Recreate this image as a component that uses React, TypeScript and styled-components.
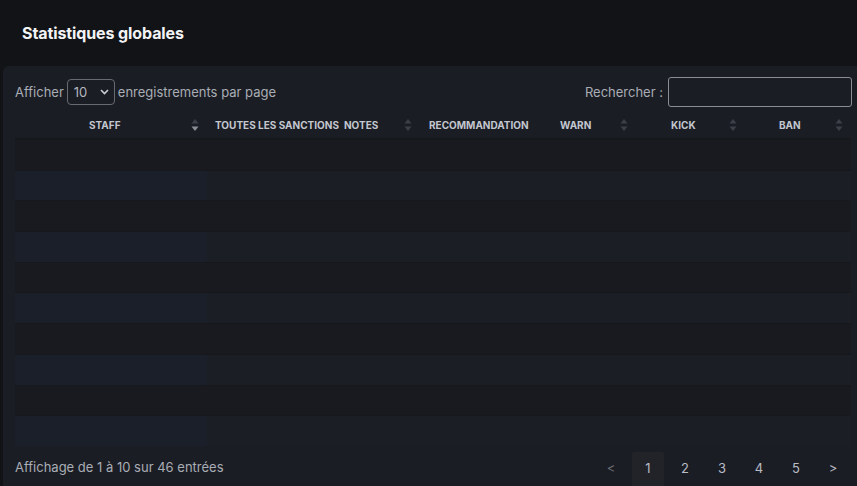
import React from "react";
import styled, { createGlobalStyle } from "styled-components";

const Global = createGlobalStyle`
  html, body { margin: 0; padding: 0; background: #121317; }
  body { font-family: Inter, "Noto Sans", sans-serif; }
`;

const Page = styled.div`
  width: 857px;
  height: 486px;
  overflow: hidden;
  background: #121317;
  display: flex;
  flex-direction: column;
`;

const Title = styled.h1`
  margin: 0;
  flex: none;
  height: 66px;
  padding-left: 22px;
  display: flex;
  align-items: center;
  font-size: 16px;
  font-weight: 700;
  color: #f2f3f5;
  letter-spacing: -0.1px;
`;

const Card = styled.div`
  margin-left: 3px;
  width: 860px;
  flex: 1;
  box-sizing: border-box;
  background: #1b1d24;
  border-radius: 6px 6px 0 0;
  padding: 12px 12px 0 12px;
  display: flex;
  flex-direction: column;
`;

const Controls = styled.div`
  flex: none;
  height: 28px;
  display: flex;
  align-items: center;
  justify-content: space-between;
  font-size: 13px;
  color: #a9adb5;
`;

const Group = styled.label`
  display: flex;
  align-items: center;
  gap: 3px;
`;

const Select = styled.div`
  width: 48px;
  height: 26px;
  box-sizing: border-box;
  border: 1px solid #676a71;
  border-radius: 4px;
  display: flex;
  align-items: center;
  justify-content: space-between;
  padding: 0 5px 0 6px;
  color: #b4b8c0;
  font-size: 13px;
`;

const SearchBox = styled.div`
  width: 184px;
  height: 30px;
  box-sizing: border-box;
  border: 1px solid #8a8d94;
  border-radius: 3px;
  margin-left: 2px;
  margin-right: -1px;
`;

const Table = styled.div`
  margin-top: 4px;
  width: 836px;
  display: flex;
  flex-direction: column;
  flex: none;
`;

const cols = "192px 133px 81px 124px 105px 110px 91px";

const HeadRow = styled.div`
  display: grid;
  grid-template-columns: ${cols};
  height: 28px;
  border-bottom: 1px solid #16171b;
`;

const HeadCell = styled.div<{ $pl: number }>`
  display: flex;
  align-items: center;
  padding-left: ${(p) => p.$pl}px;
  padding-top: 1px;
  font-size: 10px;
  font-weight: 700;
  color: #c3c7cf;
  text-transform: uppercase;
  white-space: nowrap;
`;

const SortIcon = styled.svg<{ $ml: number }>`
  margin-left: ${(p) => p.$ml}px;
  flex: none;
`;

const Row = styled.div<{ $odd: boolean }>`
  display: grid;
  grid-template-columns: ${cols};
  height: 30.7px;
  box-sizing: border-box;
  border-top: 1px solid #17181c;
  background: ${(p) => (p.$odd ? "#191a1f" : "#1b1e24")};
`;

const StaffCell = styled.div<{ $odd: boolean }>`
  background: ${(p) => (p.$odd ? "#191a1f" : "#1a1f29")};
`;

const Cell = styled.div``;

const Footer = styled.div`
  display: flex;
  justify-content: space-between;
  align-items: flex-start;
  margin-top: 6px;
  width: 836px;
`;

const Info = styled.div`
  font-size: 13px;
  color: #a9adb5;
  padding-top: 7px;
`;

const Pager = styled.div`
  display: flex;
  gap: 5px;
  margin-right: 2px;
`;

const PageBtn = styled.div<{ $active?: boolean; $dim?: boolean }>`
  width: 32px;
  height: 36px;
  display: flex;
  align-items: center;
  justify-content: center;
  padding-bottom: 4px;
  box-sizing: border-box;
  font-size: 13px;
  color: ${(p) => (p.$dim ? "#6b6e75" : "#b8bcc4")};
  background: ${(p) => (p.$active ? "#212329" : "transparent")};
  border-radius: 2px 2px 0 0;
`;

const Sort = ({ ml, active }: { ml: number; active?: boolean }) => (
  <SortIcon $ml={ml} width="8" height="14" viewBox="0 0 8 14">
    <path d="M4 1 L7.5 5.5 H0.5 Z" fill="#3d4048" />
    <path d="M4 13 L7.5 8.5 H0.5 Z" fill={active ? "#8a8e96" : "#3d4048"} />
  </SortIcon>
);

const headers: { label: string; pl: number; ml?: number; active?: boolean }[] = [
  { label: "Staff", pl: 74, ml: 70, active: true },
  { label: "Toutes les sanctions", pl: 8 },
  { label: "Notes", pl: 4, ml: 26 },
  { label: "Recommandation", pl: 8 },
  { label: "Warn", pl: 15, ml: 29 },
  { label: "Kick", pl: 21, ml: 33 },
  { label: "Ban", pl: 19, ml: 34 },
];

export default function App() {
  const rows = Array.from({ length: 10 }, (_, i) => i);
  return (
    <Page>
      <Global />
      <Title>Statistiques globales</Title>
      <Card>
        <Controls>
          <Group>
            Afficher
            <Select>
              <span>10</span>
              <svg width="9" height="6" viewBox="0 0 9 6">
                <path d="M1 1 L4.5 4.5 L8 1" stroke="#c8ccd3" strokeWidth="1.6" fill="none" />
              </svg>
            </Select>
            enregistrements par page
          </Group>
          <Group>
            Rechercher :
            <SearchBox />
          </Group>
        </Controls>
        <Table>
          <HeadRow>
            {headers.map((h) => (
              <HeadCell key={h.label} $pl={h.pl}>
                {h.label}
                {h.ml !== undefined && <Sort ml={h.ml} active={h.active} />}
              </HeadCell>
            ))}
          </HeadRow>
          {rows.map((i) => (
            <Row key={i} $odd={i % 2 === 0}>
              <StaffCell $odd={i % 2 === 0} />
              <Cell />
              <Cell />
              <Cell />
              <Cell />
              <Cell />
              <Cell />
            </Row>
          ))}
        </Table>
        <Footer>
          <Info>Affichage de 1 à 10 sur 46 entrées</Info>
          <Pager>
            <PageBtn $dim>&lt;</PageBtn>
            <PageBtn $active>1</PageBtn>
            <PageBtn>2</PageBtn>
            <PageBtn>3</PageBtn>
            <PageBtn>4</PageBtn>
            <PageBtn>5</PageBtn>
            <PageBtn>&gt;</PageBtn>
          </Pager>
        </Footer>
      </Card>
    </Page>
  );
}
